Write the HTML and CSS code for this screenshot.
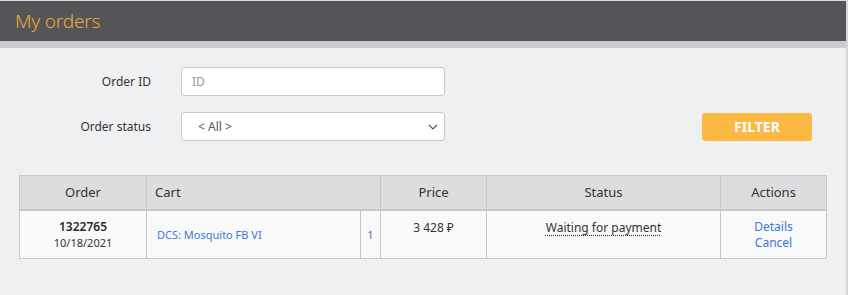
FILE: index.html
```html
<!DOCTYPE html>
<html>
<head>
<meta charset="utf-8">
<link rel="stylesheet" href="styles.css">
</head>
<body>
<div class="page">
  <header class="topbar"><h1 class="title">My orders</h1></header>
  <div class="band"></div>
  <main class="content">
    <form class="filters">
      <label class="label" for="oid">Order ID</label>
      <input class="field" id="oid" type="text" placeholder="ID">
      <span></span>
      <label class="label" for="ost">Order status</label>
      <div class="select">
        <span>&lt; All &gt;</span>
        <svg class="chev" width="10" height="6" viewBox="0 0 10 6"><path d="M1 1l4 4 4-4" fill="none" stroke="#555" stroke-width="1.2"/></svg>
      </div>
      <div class="btn-cell"><button class="btn" type="button">FILTER</button></div>
    </form>
    <table class="orders">
      <colgroup>
        <col style="width:127px"><col style="width:214px"><col style="width:20px"><col style="width:106px"><col style="width:234px"><col style="width:106px">
      </colgroup>
      <thead>
        <tr><th>Order</th><th colspan="2" class="left">Cart</th><th>Price</th><th>Status</th><th>Actions</th></tr>
      </thead>
      <tbody>
        <tr>
          <td class="top"><div class="num">1322765</div><div class="date">10/18/2021</div></td>
          <td class="left"><a class="link small">DCS: Mosquito FB VI</a></td>
          <td class="qty">1</td>
          <td class="top price">3 428 ₽</td>
          <td class="top"><span class="status">Waiting for payment</span></td>
          <td class="top actions"><a class="link">Details</a><a class="link">Cancel</a></td>
        </tr>
      </tbody>
    </table>
  </main>
</div>
</body>
</html>
```
FILE: styles.css
```css
* { box-sizing: border-box; }
html, body { margin: 0; padding: 0; }
body {
  font-family: "Noto Sans", "Open Sans", sans-serif;
  color: #333;
  background: #eff0f2;
}
.page {
  width: 848px;
  height: 295px;
  border-right: 2px solid #d6d6d8;
  border-top: 1px solid #dcdcdc;
  background: #eff0f2;
}
.topbar {
  height: 40px;
  background: #545559;
  padding-left: 15px;
  display: flex;
  align-items: center;
}
.title {
  margin: 0;
  font-weight: 300;
  font-size: 19px;
  color: #f3a732;
  letter-spacing: -0.2px;
}
.band { height: 7px; background: #cbcccd; }
.content { padding: 19px 19px 0 19px; }
.filters {
  display: grid;
  grid-template-columns: 132px 264px 1fr;
  column-gap: 30px;
  row-gap: 16px;
  align-items: center;
}
.label {
  text-align: right;
  font-size: 12px;
  color: #333;
}
.field, .select {
  height: 29px;
  border: 1px solid #c9c9c9;
  border-radius: 3px;
  background: #fff;
  font-family: inherit;
  font-size: 12px;
  padding: 0 16px 0 10px;
}
.field::placeholder { color: #999; }
.select {
  display: flex;
  align-items: center;
  justify-content: space-between;
  color: #555;
  padding-left: 16px;
  padding-right: 6px;
}
.btn-cell { display: flex; justify-content: flex-end; padding-right: 15px; }
.btn {
  width: 110px;
  height: 28px;
  border: 0;
  border-radius: 3px;
  background: #fbb944;
  color: #fff;
  font-family: inherit;
  font-weight: 700;
  font-size: 14px;
}
.orders {
  margin-top: 34px;
  width: 807px;
  border-collapse: collapse;
  table-layout: fixed;
  font-size: 12px;
}
.orders th {
  height: 34px;
  background: #dcdddf;
  font-weight: 400;
  font-size: 13px;
  border: 1px solid #c8c8c8;
  border-bottom-width: 2px;
  text-align: center;
  padding: 0 8px;
}
.orders th.left { text-align: left; }
.orders td {
  height: 49px;
  background: #f9f9f9;
  border: 1px solid #c8c8c8;
  border-top: 0;
  text-align: center;
  padding: 0 8px;
}
.orders td.left { text-align: left; padding-left: 10px; }
.orders td.qty { border-left-color: #dcdcdc; padding: 0; color: #4a6fc0; font-size: 11px; }
.orders td.top { vertical-align: top; padding-top: 8px; }
.num { font-weight: 600; font-size: 12px; line-height: 16px; color: #2b2b2b; }
.date { font-size: 11px; line-height: 16px; }
.actions .link { display: block; }
.link { color: #3a78d9; font-size: 12px; line-height: 16px; }
.small { font-size: 11px; }
.status { text-decoration: underline dotted; text-underline-offset: 3px; }
```
